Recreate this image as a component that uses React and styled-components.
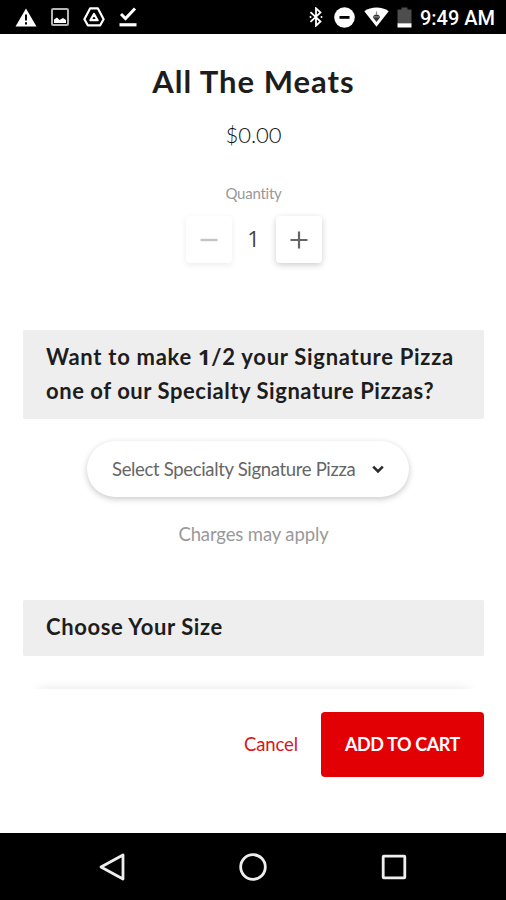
import React, { useState } from "react";
import styled, { createGlobalStyle } from "styled-components";

const App = () => {
  const [quantity, setQuantity] = useState(1);

  return (
    <>
      <GlobalStyle />
      <Screen>
        <StatusBar>
          <StatusIcons>
            <svg width="22" height="19" viewBox="0 0 22 19">
              <path d="M11 0.5L21.5 18.5H0.5Z" fill="#fff" />
              <path d="M11 6.5V12.5M11 14.2V16.4" stroke="#000" strokeWidth="2" />
            </svg>
            <svg width="18" height="18" viewBox="0 0 18 18">
              <rect x="1" y="1" width="16" height="16" rx="1" fill="none" stroke="#b5b5b5" strokeWidth="2" />
              <path d="M3 15V11.5L6 9.5L8.5 12L12 10L15 12V15Z" fill="#fff" />
            </svg>
            <svg width="22" height="20" viewBox="0 0 22 20">
              <path d="M7.2 1.3H14.8L20.6 12.2L17.2 18.3H4.8L1.4 12.2Z" fill="none" stroke="#fff" strokeWidth="2.2" strokeLinejoin="round" />
              <path d="M11 7L14.6 13.2H7.4Z" fill="none" stroke="#fff" strokeWidth="2.2" strokeLinejoin="round" />
            </svg>
            <svg width="18" height="20" viewBox="0 0 18 20">
              <path d="M2 7L6.5 11.5L16 1.5" fill="none" stroke="#fff" strokeWidth="3" />
              <path d="M0.5 17.8H17.5" stroke="#fff" strokeWidth="3.2" />
            </svg>
          </StatusIcons>
          <StatusInfo>
            <BluetoothIcon width="14" height="20" viewBox="0 0 14 20">
              <path d="M1.5 5.2L11.5 14.5L7 18.7V1.3L11.5 5.5L1.5 14.8" fill="none" stroke="#fff" strokeWidth="1.8" />
              <circle cx="1.5" cy="10" r="1" fill="#fff" />
              <circle cx="12.5" cy="10" r="1" fill="#fff" />
            </BluetoothIcon>
            <svg width="22" height="22" viewBox="0 0 22 22">
              <circle cx="10.5" cy="11.5" r="10.3" fill="#fff" />
              <rect x="5.5" y="10" width="10" height="2.8" fill="#000" />
            </svg>
            <svg width="25" height="20" viewBox="0 0 25 20">
              <path d="M0.3 4.2C7 -0.8 18 -0.8 24.7 4.2L12.5 19.8Z" fill="#fff" />
              <path d="M9 10.5C9 6.5 16 6.5 16 10.5L12.5 15Z" fill="#333" />
              <path d="M12.5 4.5V8M9.5 9.8H15.5" stroke="#888" strokeWidth="1.2" />
            </svg>
            <svg width="15" height="21" viewBox="0 0 15 21">
              <path d="M0.5 2.5H4.5V0.5H10.5V2.5H14.5V16.5H0.5Z" fill="#4d4d4d" />
              <rect x="0.5" y="16.3" width="14" height="4.2" fill="#fff" />
            </svg>
            <Time>9:49 AM</Time>
          </StatusInfo>
        </StatusBar>

        <Content>
          <Title>All The Meats</Title>
          <Price>$0.00</Price>
          <QuantityLabel>Quantity</QuantityLabel>
          <Stepper>
            <StepButton
              $muted={quantity === 1}
              onClick={() => setQuantity(Math.max(1, quantity - 1))}
            >
              <svg width="18" height="18" viewBox="0 0 18 18">
                <path d="M0.5 9H17.5" stroke="currentColor" strokeWidth="2.4" />
              </svg>
            </StepButton>
            <Count>{quantity}</Count>
            <StepButton onClick={() => setQuantity(quantity + 1)}>
              <svg width="18" height="18" viewBox="0 0 18 18">
                <path d="M0.5 9H17.5M9 0.5V17.5" stroke="currentColor" strokeWidth="2.2" />
              </svg>
            </StepButton>
          </Stepper>

          <SectionHeader $top={67}>
            <Line $spacing={0.72}>
              Want to make <PlainOne>1</PlainOne>/2 your Signature Pizza
            </Line>
            <Line $spacing={0.55}>one of our Specialty Signature Pizzas?</Line>
          </SectionHeader>
          <Select>
            <SelectText>Select Specialty Signature Pizza</SelectText>
            <svg width="12" height="9" viewBox="0 0 12 9">
              <path d="M1.2 1.6L6 6.4L10.8 1.6" fill="none" stroke="#2b2b2b" strokeWidth="2.6" />
            </svg>
          </Select>
          <Note>Charges may apply</Note>

          <SectionHeader $top={54}>
            <Line $spacing={0.6}>Choose Your Size</Line>
          </SectionHeader>
          <SizeCard />
        </Content>

        <Footer>
          <CancelButton>Cancel</CancelButton>
          <AddButton>ADD TO CART</AddButton>
        </Footer>

        <NavBar>
          <svg width="28" height="30" viewBox="0 0 28 30">
            <path d="M25 3V27L3 15Z" fill="none" stroke="#eee" strokeWidth="2.8" strokeLinejoin="round" />
          </svg>
          <svg width="28" height="28" viewBox="0 0 28 28">
            <circle cx="14" cy="14" r="12.3" fill="none" stroke="#eee" strokeWidth="2.8" />
          </svg>
          <svg width="28" height="28" viewBox="0 0 28 28">
            <rect x="3.2" y="3.2" width="21.6" height="21.6" rx="0.6" fill="none" stroke="#eee" strokeWidth="2.8" />
          </svg>
        </NavBar>
      </Screen>
    </>
  );
};

const GlobalStyle = createGlobalStyle`
  * {
    box-sizing: border-box;
  }
  body {
    margin: 0;
    background: #fff;
  }
  svg {
    display: block;
    flex-shrink: 0;
  }
  button {
    border: 0;
    padding: 0;
    font-family: inherit;
    cursor: pointer;
  }
`;

const Screen = styled.div`
  display: flex;
  flex-direction: column;
  width: 506px;
  height: 900px;
  overflow: hidden;
  background: #fff;
  font-family: Lato, sans-serif;
  white-space: nowrap;
`;

const StatusBar = styled.div`
  display: flex;
  justify-content: space-between;
  align-items: center;
  height: 34px;
  padding: 0 11px 0 15px;
  background: #000;
  flex-shrink: 0;
`;

const StatusIcons = styled.div`
  display: flex;
  align-items: center;
  gap: 14px;
`;

const StatusInfo = styled.div`
  display: flex;
  align-items: center;
  gap: 8px;
`;

const BluetoothIcon = styled.svg`
  margin-right: 3px;
`;

const Time = styled.span`
  padding-top: 3px;
  font-family: Roboto, sans-serif;
  font-size: 20px;
  font-weight: 500;
  line-height: 31px;
  color: #fff;
`;

const Content = styled.main`
  display: flex;
  flex-direction: column;
  align-items: center;
  height: 655px;
  padding: 0 22px 0 23px;
  overflow: hidden;
  flex-shrink: 0;
`;

const Title = styled.h1`
  margin: 27px 0 0;
  font-size: 31px;
  line-height: 40px;
  font-weight: 700;
  letter-spacing: 1px;
  color: #1d1d1d;
`;

const Price = styled.div`
  margin-top: 19px;
  font-size: 22px;
  line-height: 30px;
  font-weight: 300;
  color: #111;
`;

const QuantityLabel = styled.div`
  margin-top: 33px;
  font-size: 15px;
  line-height: 20px;
  letter-spacing: -0.25px;
  color: #999;
`;

const Stepper = styled.div`
  display: flex;
  align-items: center;
  margin-top: 13px;
`;

const StepButton = styled.button`
  display: flex;
  align-items: center;
  justify-content: center;
  width: 46px;
  height: 47px;
  border-radius: 4px;
  background: #fff;
  color: ${(props) => (props.$muted ? "#c4c4c4" : "#666")};
  box-shadow: 0 2px 6px
    ${(props) => (props.$muted ? "rgba(0, 0, 0, 0.08)" : "rgba(0, 0, 0, 0.2)")};
`;

const Count = styled.span`
  width: 44px;
  padding-bottom: 3px;
  font-family: "Open Sans", sans-serif;
  font-size: 22px;
  line-height: 30px;
  text-align: center;
  color: #444;
`;

const SectionHeader = styled.div`
  align-self: stretch;
  min-height: 56px;
  margin-top: ${(props) => props.$top}px;
  padding: 10px 23px 11px;
  border-radius: 2px;
  background: #eee;
  flex-shrink: 0;
`;

const Line = styled.div`
  font-size: 22px;
  line-height: 34px;
  font-weight: 700;
  letter-spacing: ${(props) => props.$spacing}px;
  color: #1d1d1d;
`;

const PlainOne = styled.span`
  font-family: "Open Sans", sans-serif;
  line-height: 1;
`;

const Select = styled.div`
  display: flex;
  align-items: center;
  justify-content: space-between;
  width: 322px;
  height: 56px;
  margin: 22px 11px 0 0;
  padding: 0 25px;
  border-radius: 28px;
  background: #fff;
  box-shadow: 0 2px 6px rgba(0, 0, 0, 0.22);
  flex-shrink: 0;
`;

const SelectText = styled.span`
  font-size: 18.5px;
  letter-spacing: -0.33px;
  color: #666;
`;

const Note = styled.div`
  margin-top: 25px;
  font-size: 18.5px;
  line-height: 24px;
  letter-spacing: -0.12px;
  color: #999;
`;

const SizeCard = styled.div`
  width: 430px;
  height: 90px;
  margin-top: 35px;
  flex-shrink: 0;
  background: #fff;
  box-shadow: 0 0 12px rgba(0, 0, 0, 0.14);
`;

const Footer = styled.div`
  display: flex;
  align-items: center;
  justify-content: flex-end;
  height: 144px;
  padding: 0 22px 33px 0;
  gap: 23px;
  background: #fff;
  flex-shrink: 0;
`;

const CancelButton = styled.button`
  padding-bottom: 1px;
  background: none;
  font-size: 18.5px;
  letter-spacing: -0.1px;
  color: #d9151b;
`;

const AddButton = styled.button`
  width: 163px;
  height: 65px;
  padding-bottom: 1px;
  border-radius: 4px;
  background: #e30005;
  font-size: 18px;
  font-weight: 700;
  letter-spacing: -0.4px;
  color: #fff;
`;

const NavBar = styled.div`
  display: flex;
  align-items: center;
  justify-content: space-between;
  height: 67px;
  padding: 0 98px;
  background: #000;
  flex-shrink: 0;
`;

export default App;
